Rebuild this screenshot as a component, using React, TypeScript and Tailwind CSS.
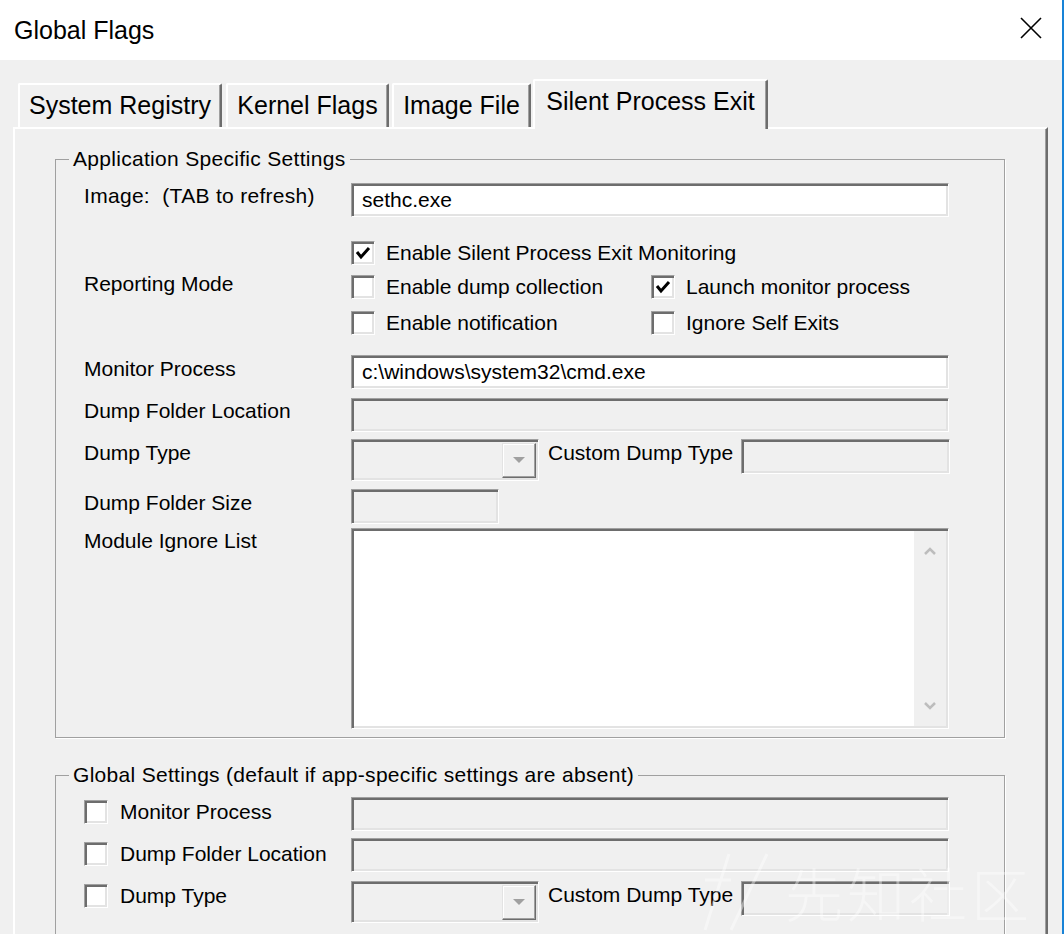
import React from "react";

const sunken =
  "border border-t-[#a0a0a0] border-l-[#a0a0a0] border-r-white border-b-white shadow-[inset_2px_2px_0_#6d6d6d,inset_-2px_-2px_0_#e3e3e3]";

function Input({ value, disabled, className }: { value?: string; disabled?: boolean; className: string }) {
  return (
    <div
      className={`${sunken} ${disabled ? "bg-[#f0f0f0]" : "bg-white"} flex items-center pl-[10px] text-black ${className}`}
    >
      {value}
    </div>
  );
}

function Check({ checked }: { checked?: boolean }) {
  return (
    <div className={`${sunken} bg-white w-[24px] h-[24px] shrink-0 flex items-center justify-center`}>
      {checked && (
        <svg width="16" height="14" viewBox="0 0 16 14">
          <polyline points="2,6 6,11 14,2" fill="none" stroke="#000" strokeWidth="3" strokeLinejoin="miter" />
        </svg>
      )}
    </div>
  );
}

function CheckRow({ checked, label, className = "" }: { checked?: boolean; label: string; className?: string }) {
  return (
    <div className={`flex items-center h-[24px] ${className}`}>
      <Check checked={checked} />
      <span className="ml-[11px] leading-[22px]">{label}</span>
    </div>
  );
}

function Combo() {
  return (
    <div className={`${sunken} bg-[#f0f0f0] w-[188px] h-[42px] flex justify-end p-[3px] pr-[2px]`}>
      <div className="w-[34px] h-[35px] border border-t-[#e3e3e3] border-l-[#e3e3e3] border-r-[#6d6d6d] border-b-[#6d6d6d] shadow-[inset_-1px_-1px_0_#a0a0a0,inset_1px_1px_0_#fff] bg-[#f0f0f0] flex items-center justify-center">
        <svg width="12" height="7" viewBox="0 0 12 7">
          <polygon points="0,0 12,0 6,6" fill="#a0a0a0" />
        </svg>
      </div>
    </div>
  );
}

function Group({ title, children, className = "" }: { title: string; children: React.ReactNode; className?: string }) {
  return (
    <fieldset className={`m-0 p-0 w-[950px] border border-[#a0a0a0] shadow-[1px_1px_0_#fff] ${className}`}>
      <legend className="ml-[13px] px-[4px] leading-[22px] text-black bg-[#f0f0f0] tracking-[0.3px]">{title}</legend>
      {children}
    </fieldset>
  );
}

function Tab({ label, w, selected, className = "" }: { label: string; w: string; selected?: boolean; className?: string }) {
  return (
    <div
      className={`${w} ${
        selected ? "h-[50px] -mb-[2px] relative z-10 pb-[6px]" : "h-[44px]"
      } bg-[#f0f0f0] border-t-2 border-l-2 border-t-white border-l-white border-r-2 border-r-[#6d6d6d] shadow-[inset_-1px_0_0_#a0a0a0] rounded-t-[2px] flex items-center justify-center text-[25px] text-black ${className}`}
    >
      {label}
    </div>
  );
}

export default function App() {
  return (
    <div
      className="w-[1064px] h-[934px] overflow-hidden bg-[#f0f0f0] border-r-2 border-r-[#1883d7] flex flex-col relative text-[21px] text-black"
      style={{ fontFamily: '"Liberation Sans", Arial, sans-serif' }}
    >
      {/* Title bar */}
      <div className="h-[60px] shrink-0 bg-white flex items-center justify-between pl-[14px] pr-[20px]">
        <span className="text-[25px] leading-[30px] text-black">Global Flags</span>
        <svg width="22" height="22" viewBox="0 0 22 22" className="-mt-[4px]">
          <path d="M1 1 L21 21 M21 1 L1 21" stroke="#000" strokeWidth="1.6" />
        </svg>
      </div>

      {/* Tabs */}
      <div className="h-[67px] shrink-0 flex items-end pl-[18px]">
        <Tab label="System Registry" w="w-[204px]" />
        <Tab label="Kernel Flags" w="w-[163px]" className="ml-[4px]" />
        <Tab label="Image File" w="w-[139px]" className="ml-[3px]" />
        <Tab label="Silent Process Exit" w="w-[235px]" selected className="ml-[2px]" />
      </div>

      {/* Tab panel */}
      <div className="ml-[13px] w-[1035px] flex-1 border-t-2 border-l-2 border-t-white border-l-white border-r-2 border-r-[#6d6d6d] shadow-[inset_-1px_0_0_#a0a0a0] pl-[40px] pt-[19px]">
        <Group title="Application Specific Settings">
          <div className="pl-[28px] pb-[8px] flex flex-col">
            {/* Image */}
            <div className="flex mt-[13px]">
              <div className="w-[267px] pt-[2px] leading-[22px] tracking-[0.3px]">Image:&nbsp; (TAB to refresh)</div>
              <Input value="sethc.exe" className="w-[598px] h-[34px]" />
            </div>
            {/* Reporting mode */}
            <div className="flex mt-[24px]">
              <div className="w-[267px] pt-[32px] leading-[22px]">Reporting Mode</div>
              <div className="flex flex-col">
                <CheckRow checked label="Enable Silent Process Exit Monitoring" />
                <div className="flex mt-[10px]">
                  <CheckRow label="Enable dump collection" className="w-[300px]" />
                  <CheckRow checked label="Launch monitor process" />
                </div>
                <div className="flex mt-[12px]">
                  <CheckRow label="Enable notification" className="w-[300px]" />
                  <CheckRow label="Ignore Self Exits" />
                </div>
              </div>
            </div>
            {/* Monitor process */}
            <div className="flex mt-[20px]">
              <div className="w-[267px] pt-[3px] leading-[22px]">Monitor Process</div>
              <Input value="c:\windows\system32\cmd.exe" className="w-[598px] h-[34px]" />
            </div>
            <div className="flex mt-[9px]">
              <div className="w-[267px] pt-[2px] leading-[22px]">Dump Folder Location</div>
              <Input disabled className="w-[598px] h-[34px]" />
            </div>
            <div className="flex mt-[7px]">
              <div className="w-[267px] pt-[3px] leading-[22px]">Dump Type</div>
              <Combo />
              <div className="ml-[9px] w-[193px] pt-[3px] leading-[22px]">Custom Dump Type</div>
              <Input disabled className="w-[209px] h-[35px]" />
            </div>
            <div className="flex mt-[8px]">
              <div className="w-[267px] pt-[3px] leading-[22px]">Dump Folder Size</div>
              <Input disabled className="w-[148px] h-[35px]" />
            </div>
            <div className="flex mt-[4px]">
              <div className="w-[267px] pt-[2px] leading-[22px]">Module Ignore List</div>
              <div className={`${sunken} bg-white w-[598px] h-[201px] flex justify-end p-[2px]`}>
                <div className="w-[32px] h-full bg-[#f0f0f0] flex flex-col items-center justify-between py-[16px]">
                  <svg width="12" height="8" viewBox="0 0 12 8">
                    <polyline points="1,7 6,2 11,7" fill="none" stroke="#bdbdbd" strokeWidth="2.5" />
                  </svg>
                  <svg width="12" height="8" viewBox="0 0 12 8">
                    <polyline points="1,1 6,6 11,1" fill="none" stroke="#bdbdbd" strokeWidth="2.5" />
                  </svg>
                </div>
              </div>
            </div>
          </div>
        </Group>

        <Group title="Global Settings (default if app-specific settings are absent)" className="mt-[26px]">
          <div className="pl-[28px] pb-[20px] flex flex-col">
            <div className="flex mt-[11px]">
              <div className="w-[267px] flex items-center h-[24px] mt-[3px]">
                <Check />
                <span className="ml-[12px] leading-[22px]">Monitor Process</span>
              </div>
              <Input disabled className="w-[598px] h-[34px]" />
            </div>
            <div className="flex mt-[7px]">
              <div className="w-[267px] flex items-center h-[24px] mt-[4px]">
                <Check />
                <span className="ml-[12px] leading-[22px]">Dump Folder Location</span>
              </div>
              <Input disabled className="w-[598px] h-[34px]" />
            </div>
            <div className="flex mt-[9px]">
              <div className="w-[267px] flex items-center h-[24px] mt-[3px]">
                <Check />
                <span className="ml-[12px] leading-[22px]">Dump Type</span>
              </div>
              <Combo />
              <div className="ml-[9px] w-[193px] pt-[3px] leading-[22px]">Custom Dump Type</div>
              <Input disabled className="w-[209px] h-[35px]" />
            </div>
          </div>
        </Group>
      </div>

      {/* Watermark */}
      <div className="absolute left-[703px] top-[852px] flex items-center gap-[16px] opacity-40 pointer-events-none">
        <svg width="66" height="80" viewBox="0 0 66 80">
          <path d="M2 78 L26 2 M28 78 L64 2 M2 28 L28 28" stroke="#ffffff" strokeWidth="3" fill="none" />
        </svg>
        <span
          className="text-[58px] leading-[76px] text-white tracking-[4px]"
          style={{ fontFamily: '"Noto Sans CJK SC", sans-serif', fontWeight: 300 }}
        >
          先知社区
        </span>
      </div>
    </div>
  );
}
